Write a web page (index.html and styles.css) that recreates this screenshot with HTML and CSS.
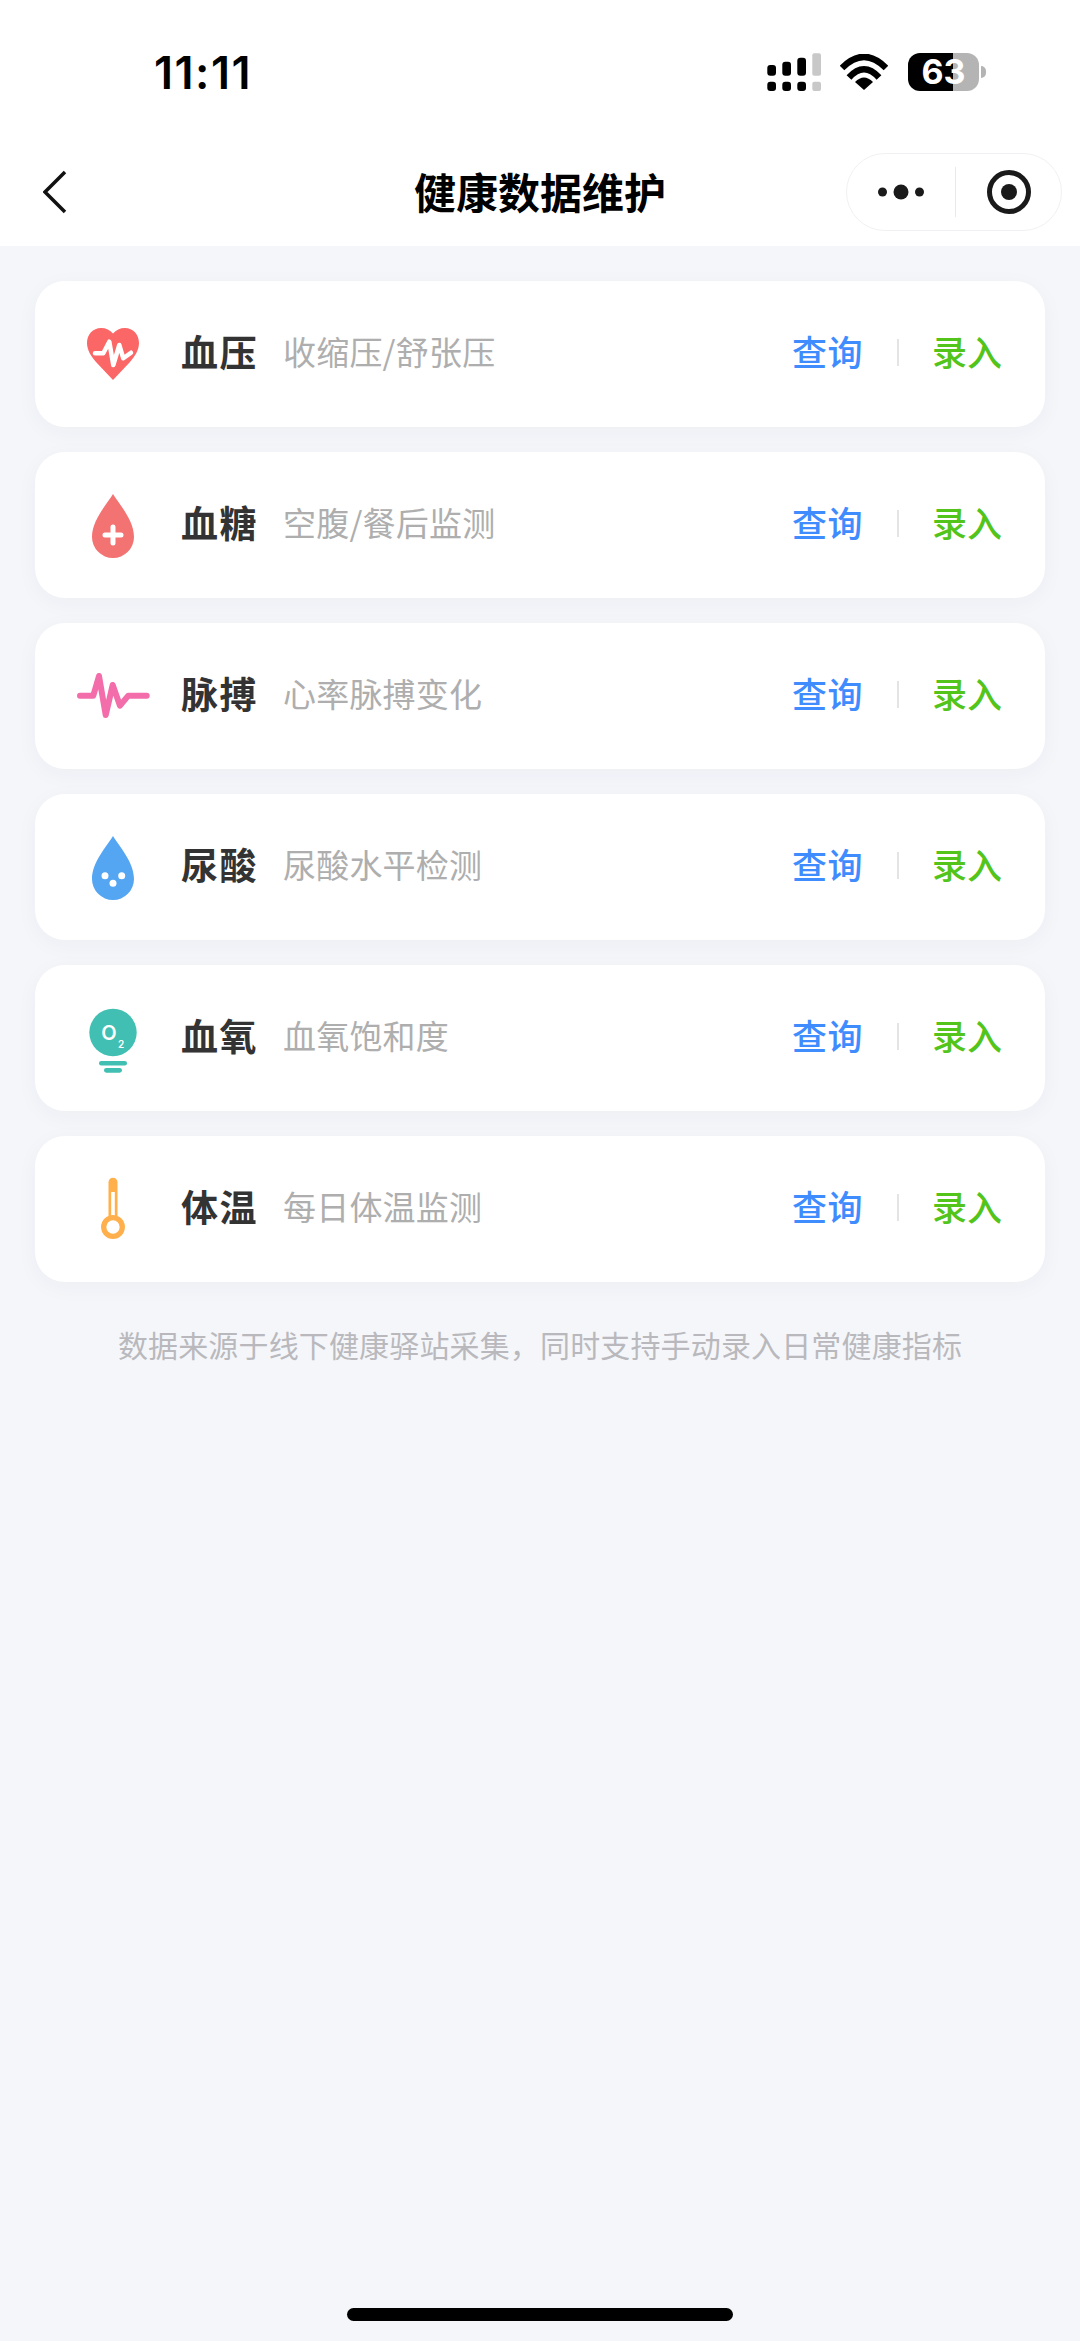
FILE: index.html
```html
<!DOCTYPE html>
<html lang="zh-CN">
<head>
<meta charset="utf-8">
<title>健康数据维护</title>
<link rel="stylesheet" href="styles.css">
</head>
<body>
<div class="screen">
  <header class="top">
    <div class="status">
      <span class="time">11:11</span>
      <div class="status-icons">
        <svg class="signal" viewBox="0 0 56 38" aria-hidden="true">
          <rect x="0.3" y="12" width="8.7" height="10.7" rx="3"/>
          <rect x="15.3" y="8.7" width="8.7" height="14" rx="3"/>
          <rect x="30.3" y="4.7" width="8.7" height="18" rx="3"/>
          <rect class="dim" x="45.3" y="0.3" width="8.7" height="22.4" rx="2"/>
          <rect x="0.3" y="28.7" width="8.7" height="9.3" rx="3"/>
          <rect x="15.3" y="28.7" width="8.7" height="9.3" rx="3"/>
          <rect x="30.3" y="28.7" width="8.7" height="9.3" rx="3"/>
          <rect class="dim" x="45.3" y="28.7" width="8.7" height="9.3" rx="2"/>
        </svg>
        <svg class="wifi" viewBox="0 0 48 36" aria-hidden="true">
          <path class="wifi-arc" d="M2 14Q24 -8 46 14"/>
          <path class="wifi-arc" d="M9 23.5Q24 7 39 23.5"/>
          <path d="M15 28Q24 19 33 28L24 36Z"/>
        </svg>
        <div class="battery"><span>63</span></div>
      </div>
    </div>
    <nav class="nav">
      <svg class="back" viewBox="0 0 24 44" aria-hidden="true"><path d="M22 2L2 22L22 42"/></svg>
      <h1 class="page-title">健康数据维护</h1>
      <div class="capsule">
        <svg class="more" viewBox="0 0 46 16" aria-hidden="true">
          <circle cx="4.5" cy="8" r="4.5"/><circle cx="23" cy="8" r="7.5"/><circle cx="41.500" cy="8" r="4.500"/>
        </svg>
        <i class="capsule-line"></i>
        <svg class="record" viewBox="0 0 44 44" aria-hidden="true">
          <circle class="record-ring" cx="22" cy="22" r="19.500"/><circle cx="22" cy="22" r="8"/>
        </svg>
      </div>
    </nav>
  </header>

  <main class="list">
    <section class="card">
      <svg class="icon" viewBox="0 0 80 80" aria-hidden="true">
        <path class="c-heart" d="M40 19.500C43 16 47 14 52 14C60 14 66 20.500 66 29C66 36 62 42 57 48L40 66L23 48C18 42 14 36 14 29C14 20.500 20 14 28 14C33 14 37 16 40 19.500Z"/>
        <path class="wave-white" d="M22 39.300H30.300L36.300 27.700L40.300 51L46.300 31L50.300 44.300L58 38.700"/>
      </svg>
      <h2 class="name">血压</h2>
      <p class="desc">收缩压/舒张压</p>
      <div class="actions"><a class="query">查询</a><i class="sep"></i><a class="entry">录入</a></div>
    </section>
    <section class="card">
      <svg class="icon" viewBox="0 0 80 80" aria-hidden="true">
        <path class="c-sugar" d="M40 9C46 19 61 35 61 52A21 21 0 0 1 19 52C19 35 34 19 40 9Z"/>
        <path class="plus" d="M32 50H48M40 42V58"/>
      </svg>
      <h2 class="name">血糖</h2>
      <p class="desc">空腹/餐后监测</p>
      <div class="actions"><a class="query">查询</a><i class="sep"></i><a class="entry">录入</a></div>
    </section>
    <section class="card">
      <svg class="icon" viewBox="0 0 80 80" aria-hidden="true">
        <path class="wave-pink" d="M7 39.700H20.300L26 20L32.700 59L39.700 29L47 49.700L55.300 39.700H73.700"/>
      </svg>
      <h2 class="name">脉搏</h2>
      <p class="desc">心率脉搏变化</p>
      <div class="actions"><a class="query">查询</a><i class="sep"></i><a class="entry">录入</a></div>
    </section>
    <section class="card">
      <svg class="icon" viewBox="0 0 80 80" aria-hidden="true">
        <path class="c-uric" d="M40 9C46 19 61 35 61 52A21 21 0 0 1 19 52C19 35 34 19 40 9Z"/>
        <circle class="dot" cx="32" cy="48.700" r="3.500"/><circle class="dot" cx="48.700" cy="48.700" r="3.500"/><circle class="dot" cx="40" cy="56.300" r="3.500"/>
      </svg>
      <h2 class="name">尿酸</h2>
      <p class="desc">尿酸水平检测</p>
      <div class="actions"><a class="query">查询</a><i class="sep"></i><a class="entry">录入</a></div>
    </section>
    <section class="card">
      <svg class="icon" viewBox="0 0 80 80" aria-hidden="true">
        <circle class="c-oxy" cx="40" cy="34.500" r="23.700"/>
        <text class="o-big" x="36" y="41.500" text-anchor="middle">O</text>
        <text class="o-small" x="48" y="49.500" text-anchor="middle">2</text>
        <rect class="c-oxy" x="26" y="63" width="28" height="4.500" rx="2.250"/>
        <rect class="c-oxy" x="31" y="70" width="18" height="4.700" rx="2.350"/>
      </svg>
      <h2 class="name">血氧</h2>
      <p class="desc">血氧饱和度</p>
      <div class="actions"><a class="query">查询</a><i class="sep"></i><a class="entry">录入</a></div>
    </section>
    <section class="card">
      <svg class="icon" viewBox="0 0 80 80" aria-hidden="true">
        <rect class="c-temp" x="35.500" y="8.700" width="9" height="42" rx="4.500"/>
        <rect class="dot" x="38.200" y="23" width="3.600" height="28"/>
        <circle class="ring" cx="40" cy="58" r="9.300"/>
      </svg>
      <h2 class="name">体温</h2>
      <p class="desc">每日体温监测</p>
      <div class="actions"><a class="query">查询</a><i class="sep"></i><a class="entry">录入</a></div>
    </section>
    <p class="note">数据来源于线下健康驿站采集，同时支持手动录入日常健康指标</p>
  </main>
  <div class="home-bar"></div>
</div>
</body>
</html>
```
FILE: styles.css
```css
* { box-sizing: border-box; margin: 0; padding: 0; }
html, body { width: 1080px; height: 2341px; overflow: hidden; }
body { font-family: "Noto Sans CJK SC", "Noto Sans", sans-serif; background: #f5f6fa; }
.screen { position: relative; width: 1080px; height: 2341px; display: flex; flex-direction: column; }

.top { background: #fff; height: 246px; }
.status { height: 144px; display: flex; align-items: center; justify-content: space-between; padding: 0 94px 0 154px; }
.time { font-family: Inter, sans-serif; font-size: 45px; font-weight: 600; color: #000; letter-spacing: 1.500px; }
.status-icons { display: flex; align-items: center; }
.signal { width: 56px; height: 38px; fill: #000; margin-right: 17px; }
.signal .dim { fill: #c8c8c8; }
.wifi { width: 48px; height: 36px; fill: #000; margin-right: 20px; }
.wifi-arc { fill: none; stroke: #000; stroke-width: 6.500; }
.battery { position: relative; width: 71px; height: 38px; border-radius: 12px; background: linear-gradient(90deg, #000 0 63.400%, #b4b4b4 63.400% 100%); margin-right: 7px; display: flex; align-items: center; justify-content: center; font-family: Inter, sans-serif; font-size: 34px; font-weight: 700; color: #fff; line-height: 38px; }
.battery::after { content: ""; position: absolute; right: -7px; top: 13px; width: 5px; height: 12px; background: #b4b4b4; border-radius: 0 6px 6px 0; }

.nav { display: grid; grid-template-columns: 1fr auto 1fr; align-items: center; height: 102px; padding: 8px 18px 16px; }
.back { width: 24px; height: 44px; margin-left: 25px; fill: none; stroke: #111; stroke-width: 3.500; }
.page-title { font-size: 42px; font-weight: 600; color: #000; line-height: 78px; text-align: center; margin-bottom: 2px; }
.capsule { justify-self: end; width: 216px; height: 78px; border: 1.500px solid #f1f1f3; border-radius: 39px; display: flex; align-items: center; padding-left: 30.500px; }
.more { width: 46px; height: 16px; fill: #1a1a1a; }
.capsule-line { width: 1.500px; height: 50px; background: #e9e9ec; margin: 0 30.500px 0 31px; }
.record { width: 44px; height: 44px; fill: #1a1a1a; }
.record-ring { fill: none; stroke: #1a1a1a; stroke-width: 5px; }

.list { display: flex; flex-direction: column; gap: 25px; padding: 35px 35px 0; }
.card { height: 146px; background: #fff; border-radius: 30px; box-shadow: 0 5px 22px rgba(30, 40, 80, .04); display: flex; align-items: center; padding: 0 43px 0 38px; }
.icon { width: 80px; height: 80px; flex: none; margin-right: 28px; }
.c-heart { fill: #fb6666; }
.c-sugar { fill: #f37272; }
.c-uric { fill: #54a5f2; }
.c-oxy { fill: #40bfb2; }
.c-temp { fill: #ffb04c; }
.dot { fill: #fff; }
.wave-white { fill: none; stroke: #fff; stroke-width: 4.500; stroke-linecap: round; stroke-linejoin: round; }
.wave-pink { fill: none; stroke: #f26daa; stroke-width: 6px; stroke-linecap: round; stroke-linejoin: round; }
.plus { fill: none; stroke: #fff; stroke-width: 5px; stroke-linecap: round; }
.ring { fill: #fff; stroke: #ffb04c; stroke-width: 5.300; }
.o-big { fill: #fff; font-family: Inter, sans-serif; font-size: 20px; font-weight: 600; }
.o-small { fill: #fff; font-family: Inter, sans-serif; font-size: 10px; font-weight: 600; }
.name { font-size: 37px; font-weight: 700; color: #333; letter-spacing: 1.500px; line-height: 50px; margin: 0 25px 6px 0; }
.desc { font-size: 33px; font-weight: 400; color: #aeaeae; line-height: 50px; flex: 1; margin-bottom: 6px; letter-spacing: .2px; }
.actions { display: flex; align-items: center; font-size: 35px; font-weight: 500; line-height: 50px; margin-bottom: 6px; }
.query { color: #3f8cff; letter-spacing: .5px; }
.entry { color: #52c41a; }
.sep { width: 2px; height: 27px; background: #e4e4e4; margin: 0 33px 0 34px; position: relative; top: 1px; }

.note { margin-top: 17px; font-size: 30px; line-height: 40px; color: #b9b9bd; text-align: center; letter-spacing: .15px; }
.home-bar { position: absolute; left: 347px; top: 2308px; width: 386px; height: 13px; border-radius: 6.500px; background: #000; }
```
